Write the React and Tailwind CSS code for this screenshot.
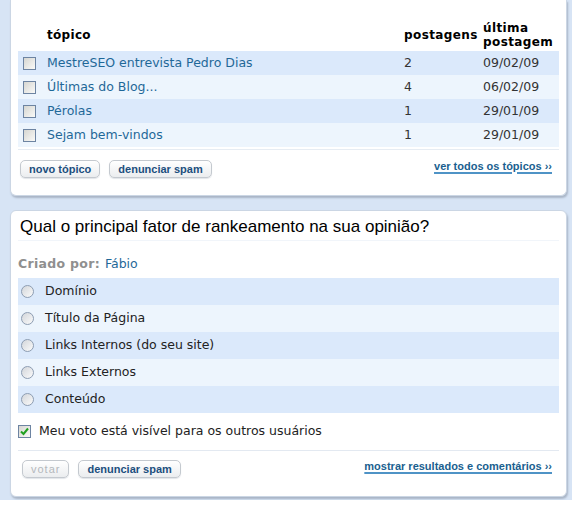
import React from "react";

const topics = [
  { title: "MestreSEO entrevista Pedro Dias", posts: 2, last: "09/02/09" },
  { title: "Últimas do Blog...", posts: 4, last: "06/02/09" },
  { title: "Pérolas", posts: 1, last: "29/01/09" },
  { title: "Sejam bem-vindos", posts: 1, last: "29/01/09" },
];

const options = [
  "Domínio",
  "Título da Página",
  "Links Internos (do seu site)",
  "Links Externos",
  "Conteúdo",
];

function Checkbox({ checked }) {
  return (
    <span className="inline-flex items-center justify-center w-[13px] h-[13px] border border-[#6d84a2] bg-gradient-to-br from-[#d6d6d1] to-[#fafaf8]">
      {checked && (
        <svg width="9" height="9" viewBox="0 0 9 9">
          <path d="M1 4.5 L3.5 7 L8 1.5" stroke="#21a121" strokeWidth="2" fill="none" />
        </svg>
      )}
    </span>
  );
}

function Radio() {
  return (
    <span className="inline-block w-[13px] h-[13px] rounded-full border border-[#8d9db2] bg-gradient-to-br from-[#d3d6da] to-[#fbfbfb]"></span>
  );
}

function Btn({ children, disabled }) {
  return (
    <button
      className={
        "h-[18px] px-[8px] rounded-[5px] border border-[#c4c9cf] bg-gradient-to-b from-white to-[#ebedef] shadow-[0_1px_1px_#e2e5e9] text-[11px] font-bold leading-none font-['Liberation_Sans',sans-serif] " +
        (disabled ? "text-[#b4b8bc] font-normal tracking-[1px]" : "text-[#1c4f7e]")
      }
    >
      {children}
    </button>
  );
}

export default function App() {
  return (
    <div className="font-['DejaVu_Sans',sans-serif] text-[12px]">
      <div className="bg-[#d7e4f5] pl-[10px] pr-[5px] pb-[3px] flex flex-col gap-[14px]">
        {/* topics card */}
        <div className="bg-white rounded-b-[6px] border-x border-b border-[#cbd6e4] shadow-[1px_2px_2px_#a9b5c6] px-[7px] pt-[18px] pb-[17px]">
          <div className="grid grid-cols-[29px_1fr_79px_76px]">
            <div className="h-[33px]"></div>
            <div className="h-[33px] flex items-center font-bold tracking-[0.3px] text-black">tópico</div>
            <div className="h-[33px] flex items-center font-bold tracking-[0.4px] text-black">postagens</div>
            <div className="h-[33px] flex flex-col justify-center font-bold tracking-[0.4px] leading-[14px] text-black">
              <span>última</span>
              <span>postagem</span>
            </div>
            {topics.map((t, i) => {
              const bg = i % 2 === 0 ? "bg-[#dbe9fb]" : "bg-[#edf5fd]";
              return (
                <React.Fragment key={i}>
                  <div className={bg + " h-[24px] flex items-center pl-[5px]"}>
                    <Checkbox />
                  </div>
                  <div className={bg + " h-[24px] flex items-center text-[#1f6898] text-[12.5px]"}>{t.title}</div>
                  <div className={bg + " h-[24px] flex items-center text-[#333] text-[12.5px]"}>{t.posts}</div>
                  <div className={bg + " h-[24px] flex items-center text-[#333] text-[12.5px]"}>{t.last}</div>
                </React.Fragment>
              );
            })}
          </div>
          <div className="border-t border-[#e6ecf3] mt-[2px] pt-[10px] flex items-center justify-between pl-[2px] pr-[7px]">
            <div className="flex gap-[9px]">
              <Btn>novo tópico</Btn>
              <Btn>denunciar spam</Btn>
            </div>
            <a className="text-[11px] font-bold text-[#1a5f8f] underline decoration-[#4f93c6] decoration-[1.5px] underline-offset-2 font-['Liberation_Sans',sans-serif] -mt-[6px]">
              ver todos os tópicos ››
            </a>
          </div>
        </div>

        {/* poll card */}
        <div className="bg-white rounded-[6px] border border-[#cbd6e4] shadow-[1px_2px_2px_#a9b5c6] px-[7px] pb-[18px]">
          <div className="h-[30px] flex items-center pt-[3px] pl-[2px] border-b border-[#f1f5fa] text-[17px] text-black font-['Liberation_Sans',sans-serif]">
            Qual o principal fator de rankeamento na sua opinião?
          </div>
          <div className="h-[37px] flex items-center pt-[9px] text-[12.5px]">
            <span className="font-bold text-[#8f8f8f] tracking-[0.3px]">Criado por:</span>
            <span className="text-[#1f6898] ml-[5px]">Fábio</span>
          </div>
          <div className="flex flex-col">
            {options.map((o, i) => (
              <div
                key={i}
                className={(i % 2 === 0 ? "bg-[#dbe9fb]" : "bg-[#edf5fd]") + " h-[27px] flex items-center pl-[3px] gap-[11px] text-[12.5px] text-[#222]"}
              >
                <Radio />
                <span>{o}</span>
              </div>
            ))}
          </div>
          <div className="h-[38px] flex items-center gap-[8px] border-b border-[#e3e9f1] text-[12.5px] text-[#222]">
            <Checkbox checked />
            <span>Meu voto está visível para os outros usuários</span>
          </div>
          <div className="pt-[9px] flex items-center justify-between pl-[4px] pr-[7px]">
            <div className="flex gap-[9px]">
              <Btn disabled>votar</Btn>
              <Btn>denunciar spam</Btn>
            </div>
            <a className="text-[11px] font-bold text-[#1a5f8f] underline decoration-[#4f93c6] decoration-[1.5px] underline-offset-2 font-['Liberation_Sans',sans-serif] -mt-[6px]">
              mostrar resultados e comentários ››
            </a>
          </div>
        </div>
      </div>
    </div>
  );
}
